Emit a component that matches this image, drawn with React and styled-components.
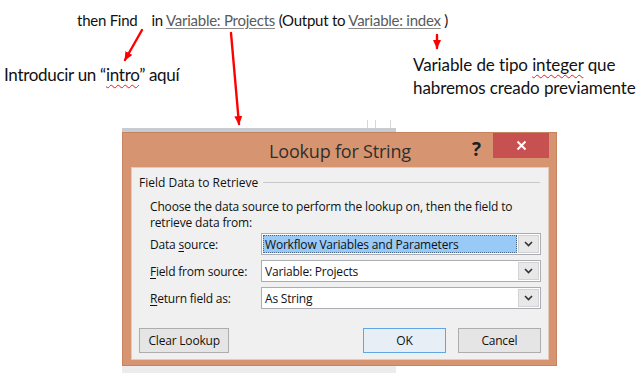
import styled, { createGlobalStyle } from "styled-components";

const GlobalStyle = createGlobalStyle`
  html, body {
    margin: 0;
    padding: 0;
    background: #ffffff;
  }
  body {
    width: 640px;
    height: 373px;
    overflow: hidden;
  }
`;

const Page = styled.div`
  position: relative;
  width: 640px;
  height: 373px;
  overflow: hidden;
  background: #ffffff;
  font-family: Lato, "Open Sans", sans-serif;
  color: #111;
`;

const Note = styled.div`
  position: absolute;
  left: ${(p) => p.$x}px;
  top: ${(p) => p.$y}px;
  font-size: ${(p) => p.$size || 17}px;
  line-height: ${(p) => p.$lh || 23}px;
  letter-spacing: ${(p) => p.$ls ?? -0.3}px;
  white-space: nowrap;
`;

const Link = styled.span`
  color: #5a5a5a;
  text-decoration: underline;
  text-decoration-color: #8a8a8a;
  text-underline-offset: 2px;
`;

const Gap = styled.span`
  display: inline-block;
  width: ${(p) => p.$w}px;
`;

const Spell = styled.span`
  text-decoration: underline wavy #e02020;
  text-decoration-thickness: 1px;
  text-underline-offset: 3px;
`;

const Arrows = styled.svg`
  position: absolute;
  left: 0;
  top: 0;
  width: 640px;
  height: 373px;
  pointer-events: none;
  z-index: 5;
`;

/* window behind the dialog */
const Stage = styled.div`
  position: relative;
  margin: 120px 0 0 122px;
  width: 435px;
  height: 253px;
`;

const BackWindow = styled.div`
  display: flex;
  flex-direction: column;
  width: 274px;
  height: 100%;
  background-image: linear-gradient(
    to right,
    transparent 245px,
    #d6d6d6 245px,
    #d6d6d6 246px,
    transparent 246px,
    transparent 253px,
    #d6d6d6 253px,
    #d6d6d6 254px,
    transparent 254px,
    transparent 268px,
    #d6d6d6 268px,
    #d6d6d6 269px,
    transparent 269px
  );
`;

const BackStrip = styled.div`
  margin-top: 8px;
  height: 4px;
  background: #c7ccd3;
`;

const BackBody = styled.div`
  flex: 1;
  background: #ececec;
`;

const Dialog = styled.div`
  position: absolute;
  left: 0;
  top: 12px;
  width: 435px;
  height: 234px;
  box-sizing: border-box;
  display: flex;
  flex-direction: column;
  background: #d69570;
  border: 1px solid #c5845f;
  padding: 0 7px 5px 8px;
  font-family: "Open Sans", "Noto Sans", sans-serif;
  font-size: 12px;
  color: #111;
`;

const TitleBar = styled.div`
  position: relative;
  height: 34px;
  display: flex;
  align-items: center;
  justify-content: center;
`;

const Title = styled.div`
  font-size: 18px;
  color: #2f2f2f;
  letter-spacing: -0.2px;
  padding-top: 2px;
`;

const Help = styled.div`
  position: absolute;
  right: 68px;
  top: 3px;
  font-size: 19px;
  font-weight: 700;
  color: #1e1e1e;
`;

const Close = styled.div`
  position: absolute;
  right: 0;
  top: 0;
  width: 56px;
  height: 25px;
  background: #c75050;
  display: flex;
  align-items: center;
  justify-content: center;
`;

const Panel = styled.div`
  flex: 1;
  background: #f0f0f0;
  border: 1px solid #e4cbb9;
  padding: 6px 7px 0 7px;
  display: flex;
  flex-direction: column;
`;

const Legend = styled.div`
  display: flex;
  align-items: center;
  gap: 5px;
  height: 16px;
`;

const Rule = styled.div`
  flex: 1;
  height: 1px;
  background: #c8c8c8;
  margin-right: 1px;
`;

const Group = styled.div`
  padding: 9px 0 0 11px;
  display: flex;
  flex-direction: column;
`;

const Intro = styled.div`
  line-height: 16px;
  letter-spacing: -0.15px;
  margin-bottom: 2px;
`;

const Row = styled.div`
  display: flex;
  align-items: center;
  height: 22px;
  margin-bottom: 5px;
`;

const Label = styled.div`
  width: 111px;
  letter-spacing: -0.2px;
  u {
    text-underline-offset: 2px;
  }
`;

const Combo = styled.div`
  flex: 1;
  height: 22px;
  box-sizing: border-box;
  border: 1px solid #abadb3;
  background: #ffffff;
  display: flex;
  align-items: stretch;
  padding: 1px;
`;

const ComboText = styled.div`
  flex: 1;
  display: flex;
  align-items: center;
  padding-left: 2px;
  letter-spacing: -0.2px;
  background: ${(p) => (p.$selected ? "#99c9f7" : "transparent")};
  outline: ${(p) => (p.$selected ? "1px dotted #4a6a8a" : "none")};
  outline-offset: -1px;
`;

const ComboButton = styled.div`
  width: 19px;
  margin-left: 1px;
  background: #e8e8e8;
  border: 1px solid #d2d2d2;
  display: flex;
  align-items: center;
  justify-content: center;
`;

const Buttons = styled.div`
  display: flex;
  align-items: center;
  margin-top: 14px;
`;

const Button = styled.div`
  width: ${(p) => p.$w}px;
  height: 25px;
  box-sizing: border-box;
  margin-left: ${(p) => p.$ml || 0}px;
  border: 1px solid ${(p) => (p.$primary ? "#5ea6e6" : "#adadad")};
  background: ${(p) => (p.$primary ? "#e7eef6" : "#e5e5e5")};
  display: flex;
  align-items: center;
  justify-content: center;
  letter-spacing: -0.2px;
`;

const Chevron = () => (
  <svg width="9" height="6" viewBox="0 0 9 6">
    <path d="M1 1l3.5 3.5L8 1" fill="none" stroke="#333" strokeWidth="1.6" />
  </svg>
);

const Field = ({ label, value, selected }) => (
  <Row>
    <Label>{label}</Label>
    <Combo>
      <ComboText $selected={selected}>{value}</ComboText>
      <ComboButton>
        <Chevron />
      </ComboButton>
    </Combo>
  </Row>
);

const App = () => (
  <Page>
    <GlobalStyle />

    <Note $x={77} $y={11} $size={15} $lh={18} $ls={-0.25}>
      then Find<Gap $w={14} />in <Link>Variable: Projects</Link> (Output to{" "}
      <Link>Variable: index</Link> )
    </Note>

    <Note $x={4} $y={63}>
      Introducir un “<Spell>intro</Spell>” aquí
    </Note>

    <Note $x={413} $y={53} $ls={-0.1}>
      Variable de tipo <Spell>integer</Spell> que
      <br />
      habremos creado previamente
    </Note>

    <Arrows viewBox="0 0 640 373">
      <defs>
        <marker
          id="head"
          markerUnits="userSpaceOnUse"
          markerWidth="10"
          markerHeight="10"
          refX="8"
          refY="4"
          orient="auto"
        >
          <path d="M0 0L9 4L0 8z" fill="#ff0000" />
        </marker>
      </defs>
      <g stroke="#ff0000" strokeWidth="2.4" strokeLinecap="round">
        <line x1="142" y1="30" x2="125" y2="60" markerEnd="url(#head)" />
        <line x1="231" y1="33" x2="239" y2="124" markerEnd="url(#head)" />
        <line x1="437" y1="35" x2="437" y2="48" markerEnd="url(#head)" />
      </g>
    </Arrows>

    <Stage>
      <BackWindow>
        <BackStrip />
        <BackBody />
      </BackWindow>

      <Dialog>
        <TitleBar>
          <Title>Lookup for String</Title>
          <Help>?</Help>
          <Close>
            <svg width="11" height="11" viewBox="0 0 11 11">
              <path d="M1.5 1.5l8 8M9.5 1.5l-8 8" stroke="#fff" strokeWidth="2" />
            </svg>
          </Close>
        </TitleBar>

        <Panel>
          <Legend>
            Field Data to Retrieve
            <Rule />
          </Legend>
          <Group>
            <Intro>
              Choose the data source to perform the lookup on, then the field to
              <br />
              retrieve data from:
            </Intro>
            <Field
              label={<>Data <u>s</u>ource:</>}
              value="Workflow Variables and Parameters"
              selected
            />
            <Field label={<><u>F</u>ield from source:</>} value="Variable: Projects" />
            <Field label={<><u>R</u>eturn field as:</>} value="As String" />
          </Group>
          <Buttons>
            <Button $w={91}>Clear Lookup</Button>
            <Button $w={83} $ml={134} $primary>
              OK
            </Button>
            <Button $w={84} $ml={12}>
              Cancel
            </Button>
          </Buttons>
        </Panel>
      </Dialog>
    </Stage>
  </Page>
);

export default App;
